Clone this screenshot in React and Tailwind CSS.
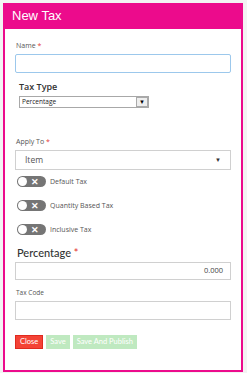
import React from "react";

const Toggle = ({ label }) => (
	<div className="flex items-center h-[11px] ml-[2px]">
		<div className="relative w-[29px] h-[11px] rounded-full bg-[#757575]">
			<div className="absolute left-[1px] top-[1px] w-[9px] h-[9px] rounded-full bg-white" />
			<span className="absolute right-[7px] top-[-1px] text-white text-[9px] font-bold leading-[13px]">✕</span>
		</div>
		<span className="ml-[4px] text-[7px] text-[#555] leading-none">{label}</span>
	</div>
);

const App = () => {
	return (
		<div className="w-[247px] h-[373px] bg-[#f3f3f3] pt-[3px] pl-[3px] pr-[4px] font-['Open_Sans',sans-serif]">
			<div className="h-[369px] flex flex-col bg-white border-x-2 border-b-2 border-[#ec0b8c]">
				<div className="h-[26px] -mx-[2px] bg-[#ec0b8c] px-[9px] flex items-center">
					<span className="text-white text-[13px] font-['Liberation_Sans',sans-serif]">New Tax</span>
				</div>
				<div className="pl-[10px] pr-[10px]">
					<div className="mt-[13px] text-[7px] text-[#555] leading-[8px] ml-[1px]">
						Name <span className="text-[#e53935]">*</span>
					</div>
					<div className="mt-[4px] h-[19px] border border-[#9cc8ec] rounded-[2px]" />

					<div className="mt-[9px] ml-[4px] text-[9px] text-[#333] leading-[10px] font-semibold">Tax Type</div>
					<div className="mt-[4px] ml-[4px] w-[130px] h-[12px] border border-[#a8a8a8] flex items-center bg-white">
						<span className="flex-1 pl-[2px] text-[6.5px] text-[#222] leading-none">Percentage</span>
						<div className="w-[12px] h-[10px] border border-[#aaa] bg-[#eee] flex items-center justify-center">
							<span className="text-[6px] text-black leading-none">▼</span>
						</div>
					</div>

					<div className="mt-[30px] ml-[1px] text-[7px] text-[#555] leading-[8px]">
						Apply To <span className="text-[#e53935]">*</span>
					</div>
					<div className="mt-[4px] h-[20px] border border-[#d0d0d0] flex items-center px-[9px]">
						<span className="flex-1 text-[8.5px] text-[#555] leading-none">Item</span>
						<span className="text-[6px] text-[#333] leading-none">▼</span>
					</div>

					<div className="mt-[6px] flex flex-col gap-[13px]">
						<Toggle label="Default Tax" />
						<Toggle label="Quantity Based Tax" />
						<Toggle label="Inclusive Tax" />
					</div>

					<div className="mt-[12px] ml-[2px] text-[11px] text-[#333] leading-[12px] font-['Lato',sans-serif] font-medium">
						Percentage <span className="text-[#e53935]">*</span>
					</div>
					<div className="mt-[3px] h-[18px] border border-[#d0d0d0] flex items-center justify-end px-[7px]">
						<span className="text-[7.5px] text-[#444] leading-none">0.000</span>
					</div>

					<div className="mt-[9px] ml-[1px] text-[6.5px] text-[#555] leading-[8px]">Tax Code</div>
					<div className="mt-[4px] h-[19px] border border-[#d0d0d0]" />

					<div className="mt-[15px] flex gap-[3px] font-['Lato',sans-serif] text-[7.5px] text-white">
						<button className="h-[14px] px-[4px] bg-[#f44336] border border-[#e02a1f] leading-none">Close</button>
						<button className="h-[14px] px-[4px] bg-[#bfe9c0] leading-none">Save</button>
						<button className="h-[14px] px-[4px] bg-[#bfe9c0] leading-none">Save And Publish</button>
					</div>
				</div>
			</div>
		</div>
	);
};

export default App;
